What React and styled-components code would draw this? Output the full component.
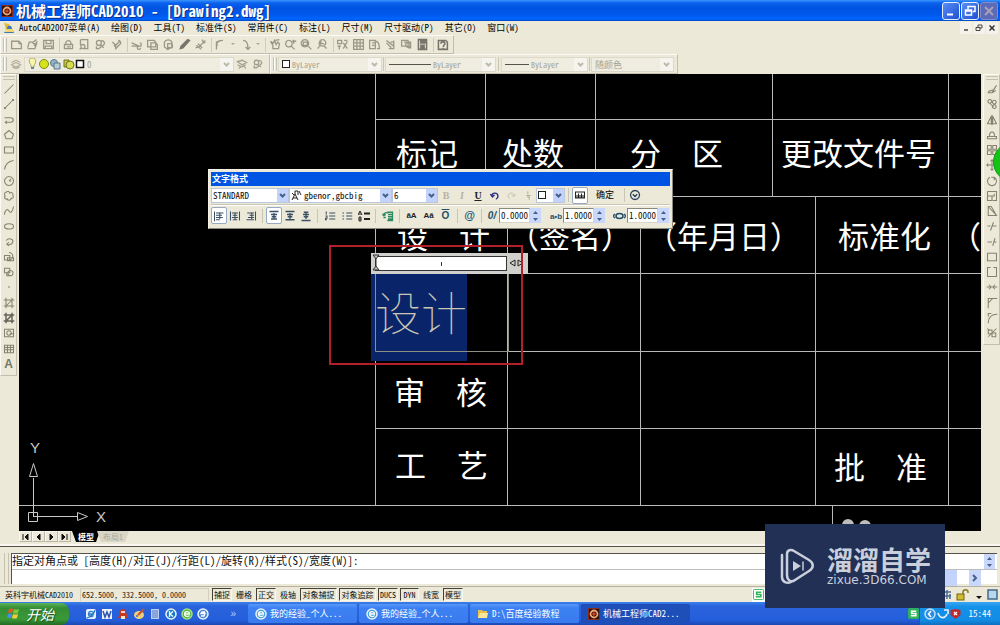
import React from "react";
import styled, { createGlobalStyle, css } from "styled-components";

const Global = createGlobalStyle`
  * { box-sizing: border-box; }
  html, body { margin: 0; padding: 0; background: #ece9d8; }
  body { font-family: "Noto Sans Mono CJK SC", "Liberation Mono", "Noto Sans CJK SC", monospace; font-size: 9px; color: #111; overflow: hidden; }
  button, input, select { font: inherit; color: inherit; margin: 0; padding: 0; border: 0; background: none; border-radius: 0; }
  svg { display: block; flex: none; }
`;

const Shell = styled.div`display: flex; flex-direction: column; min-height: 100vh; background: #ece9d8; white-space: nowrap;`;

/* ---------- icons ---------- */
const PATHS = {
  newFile: "M2 4h9l3 3v6H2zM11 4v3h3",
  open: "M2 12l2-7h4l1 2h4l-2 6H2M9 5l4-3M10 10l4-6",
  save: "M2 3h12v10H2zM5 3v4h6V3M4 13V10h8v3",
  print: "M3 8h10v5H3zM5 8c-2-6 7-7 6 0M6 11h5",
  preview: "M3 2h9v11H6M3 2v7M6 8a2.500 2.500 0 1 0 .1 0M5 12l-3 2",
  publish: "M3 6c0-4 6-4 6 0s-6 4-6 0M8 4c4-2 7 3 3 5l-5 4H3v-3M8 9l4 3",
  match: "M3 5l4 4 5-5M7 9v5M10 3a3 3 0 0 1 3 4l-5 5-3-3",
  cut: "M2 6l9 4M2 10h12M12 6a2 2 0 1 1-.1 4M11 10a2 2 0 1 0 2 2",
  copy: "M2 3h8l2 2v6H2zM6 6h6l2 2v6H6z",
  paste: "M3 5c2-4 8-3 9 0l1 6-6 3-4-3zM7 7h5v5H7z",
  brush: "M3 13l3-1 8-9-2-1-8 8z",
  brush2: "M2 12l4-1 5-5 3-3M5 7l5 5M3 9l6 5M10 2l2 4 2-1",
  undo: "M8 3l-5 2 1 5M3 8c1-4 5-5 8-5M3 5v9",
  redo: "M5 3c4 0 6 4 6 10M8 11l3 3 3-3",
  pan: "M3 4l3 5v4h7l1-6-2-2-2 3-2-5-2 4-2-3M9 3l5-1",
  zoomRt: "M6 3a4 4 0 1 0 .1 0M9 10l4 4M10 4h5M12 2v5",
  zoomWin: "M6 2a4.500 4.500 0 1 0 .1 0M10 10l4 4M4 5h5v4H4z",
  zoomPrev: "M8 2a4 4 0 1 0 .1 0M5 9l-3 4M7 4l-3 3h6M10 10l3 3",
  props: "M2 3h5v4H2zM2 10h4M10 3h4M9 6l5 7M14 4l-5 9M4 9v5",
  grid: "M2 2h12v12H2zM2 6h12M2 10h12M6 2v12M10 2v12",
  palette: "M2 3h7v10H2zM5 6h4M5 9h3M10 4c4 1 4 5 4 9h-3",
  sheet: "M3 3l9 7M12 3v10H6M3 6l6 6M8 5h4",
  markup: "M2 3h8v7H2zM5 5h8v6M7 7c3-3 7 0 5 3s-6 1-5-3M10 12h4",
  calc: "M3 2h10v12H3zM5 4h6v2H5M5 9h6M5 11h6M5 13h6M7 8v6M9 8v6",
  help: "M3 3h9l2 2v9H3zM6 7c0-3 5-3 5 0 0 2-2 1-2 4M9 12v1",
  layers: "M2 9l6-3 6 3-6 3zM2 6l6-3 6 3M3 12l5 2 5-2",
  layersB: "M2 5l6-2 6 3-6 3zM2 9l6 3 5-3M9 8l4 6M6 12l-2 2",
  line: "M2 14L14 2", ray: "M2 14L14 2M2 12v2h2M12 2h2v2",
  pline: "M2 5h8c5 0 5 6 0 6H3M5 9l-2 2 2 2",
  polygon: "M8 2l6 5-2 6H4L2 7z", rect: "M2 4h12v8H2z",
  arc: "M2 14C3 7 7 3 14 2", circle: "M8 2a6 6 0 1 0 .1 0M8 8l3-3M8 8h3",
  cloud: "M4 3c2-2 5-1 5 1 3-2 5 1 4 3 2 2 0 5-2 4-1 4-5 3-5 1-4 1-5-3-3-4-2-2-1-4 1-5z",
  spline: "M2 13c0-6 4-9 6-5s5 1 6-6", ellipse: "M8 5c8 0 8 7 0 7s-8-7 0-7z",
  earc: "M4 6c4-4 10-2 9 2s-6 4-8 3M8 8l-3 3 3 2",
  insert: "M2 6h7v6H2zM8 2a5 5 0 1 1 0 10M6 9h8v4H6z", block: "M2 3h7v6H2zM6 9h3M10 6a3.500 3.500 0 1 1-.1 0M5 9v4h4",
  point: "M7 8h2M8 7v2", hatch: "M4 1v14M12 1v14M1 4h14M1 12h14M5 11l6-6",
  region: "M2 3h12v10H2zM8 5a3 3 0 1 0 .1 0M9 9h5", table: "M2 3h12v10H2zM2 6h12M2 9h12M6 3v10M10 3v10",
  erase: "M3 13h5l6-10-4 6-6 2zM8 13l5-3",
  copyObj: "M5 2a2.500 2.500 0 1 0 .1 0M11 3a2.500 2.500 0 1 0 .1 0M11 9a2.500 2.500 0 1 0 .1 0M5 7l5 5",
  mirror: "M7 3v10H2zM9 3v10h5zM8 1v14", offset: "M2 13h12v-3h-3c2-8-8-8-6 0H2zM6 10h4",
  array: "M2 2h5v5H2zM9 2h5v5H9zM2 9h5v5H2zM9 9h5v5H9z",
  move: "M8 1v14M1 8h14M6 3l2-2 2 2M6 13l2 2 2-2M3 6L1 8l2 2M13 6l2 2-2 2",
  rotate: "M5 3a6 6 0 1 0 6 0M11 3h-4M11 3v4", scale: "M2 2h12v12H9M2 2v12h6V8H2M8 8h3V5",
  stretch: "M3 2v12h11zM3 2h4l7 12", trim: "M2 8h4M9 8h5M10 3L6 14", extend: "M2 8h6M11 8h3M12 3L9 13",
  breakPt: "M2 3h12v10H2z", brk: "M6 2H2v12h12V2h-4", join: "M1 8h6M9 8h6M4 5l3 3-3 3M12 5L9 8l3 3",
  chamfer: "M3 15V8l6-6h6M3 8V2h6", fillet: "M3 15c0-8 3-12 12-12M3 6V2h4", explode: "M3 13L14 2M3 4h5v5H3zM8 8h5v5H8zM2 2l3 3",
  alignL: "M2 2v13M4 4h10M4 7h8M4 10h9M4 13h5M9 3v9", alignC: "M2 2v12M14 2v12M4 4h8M5 7h6M4 10h8M5 13h6M8 3v10", alignR: "M14 2v12M3 4h9M6 7h6M4 10h8M2 13h10M9 3v9",
  top: "M2 2h12M4 6h8M5 9h6M4 12h8M8 4v9", middle: "M2 2h12M4 6h8M5 9h6M2 13h12M8 4v8", bottom: "M5 3h6M4 6h8M5 9h6M2 14h12M8 3v9",
  numList: "M3 2v4M2 8h2v3H2v2h2M7 4h8M7 8h8M7 12h8", bullets: "M2 4h2M2 8h2M2 12h2M7 4h8M7 8h8M7 12h8",
  field: "M7 3h7v11H7M8 6h6M8 9h6M8 12h6M2 8c0-4 3-5 6-4M2 8l-1-3M2 8l3-2M5 10H2",
  ruler: "M2 4h12v8H2zM4 8v4M6 6v6M8 8v4M10 6v6M12 8v4",
  undoBlue: "M2 6l3 4 3-3M4 9c0-6 9-6 9 0 0 2-2 4-3 4", redoGray: "M14 6l-3 4-3-3M12 9c0-6-9-6-9 0 0 2 2 3 3 3",
  frac: "M5 8h6M7 2v4M9 10v4M6 10h3", expand: "M8 2a6 6 0 1 0 .1 0M5 7l3 3 3-3",
};
const Glyph = ({ name, size = 12, color = "#85826f", width = 1.4, fill = "none" }) => (
  <svg width={size} height={size} viewBox="0 0 16 16" fill={fill} stroke={color} strokeWidth={width} aria-hidden="true"><path d={PATHS[name]} /></svg>
);

/* ---------- title and menus ---------- */
const TitleBar = styled.header`
  display: flex; align-items: center; gap: 3px; height: 21px; padding: 0 2px 0 1px; color: #fff;
  background: linear-gradient(#3a94fb 0, #0a62ee 3px, #0053e1 8px, #0059ee 15px, #0066ff 19px, #0049c5 21px);
`;
const Title = styled.h1`margin: 0; flex: 1; font-size: 15px; line-height: 20px; font-weight: 700; text-shadow: 1px 1px 0 #0a2f8a;`;
const WinButton = styled.button`
  display: grid; place-items: center; width: 18px; height: 18px; border: 1px solid #e8effc; border-radius: 3px;
  background: ${(p) => (p.$dim ? "#5b6bb8" : "linear-gradient(135deg, #5a8df5, #1d50d0)")};
  ${(p) => p.$dim && css`border-color: #7f8cc9;`}
`;
const WinButtons = styled.div`display: flex; gap: 1px;`;
const MenuBar = styled.nav`display: flex; align-items: center; height: 14px; padding: 0 2px 0 3px;`;
const MenuItems = styled.div`display: flex; gap: 11px; flex: 1; margin-left: 4px;`;
const MenuButton = styled.button`font-size: 9px; line-height: 14px; color: #000;`;
const ChildButtons = styled.div`display: flex; gap: 1px;`;
const ChildButton = styled.button`display: grid; place-items: center; width: 12px; height: 12px; background: #f4f2ea;`;

const AppIcon = ({ size = 12 }) => (
  <svg width={size} height={size} viewBox="0 0 12 12"><rect width="12" height="12" fill="#8a2a1c" /><rect x="1" y="1" width="10" height="10" fill="#2b0f0c" /><circle cx="6" cy="6" r="3.500" fill="none" stroke="#eda870" strokeWidth="1.800" /><circle cx="6" cy="6" r="1.800" fill="#d6402a" /></svg>
);

/* ---------- toolbars ---------- */
const Band = styled.div`display: flex; height: ${(p) => p.$h}px;`;
const Toolbar = styled.div`
  display: flex; align-items: center; padding: 0 3px 0 0;
  border: 1px solid; border-color: #fbfaf4 #c1bead #c1bead #fbfaf4;
`;
const Grip = styled.span`width: 4px; height: 14px; margin: 0 1px 0 2px; border: 1px solid #c4c1b0; border-width: 0 1px; box-shadow: inset 1px 0 #fff;`;
const ToolButton = styled.button`display: grid; place-items: center; width: ${(p) => p.$w || 16}px; height: 16px;`;
const Divider = styled.span`flex: none; width: 1px; height: 14px; margin: 0 ${(p) => p.$m || 0}px; background: #c9c6b5;`;
const ThinGap = styled.span`width: 4px; height: 14px; border-right: 1px solid #cfccbc;`;

const Combo = styled.label`
  display: flex; align-items: center; gap: 2px; height: 15px; width: ${(p) => p.$w}px; padding-left: ${(p) => (p.$live ? 1 : 3)}px;
  color: ${(p) => (p.$live ? "#111" : "#a5a292")};
  background: ${(p) => (p.$live ? "#fff" : "#efede0")};
  border: 1px solid ${(p) => (p.$live ? "#b9c7dd" : "#dcd9ca")};
`;
const Picker = styled.select`appearance: none; flex: 1; min-width: 0; height: 13px; outline: none; font-size: ${(p) => p.$fs || 9}px; line-height: 13px; opacity: 1;`;
const ArrowBox = styled.span`
  display: grid; place-items: center; width: ${(p) => (p.$live ? 11 : 13)}px; height: 13px;
  background: ${(p) => (p.$live ? "#c3d3fb" : "#f5f4ee")};
`;
const Arrow = ({ live }) => (
  <ArrowBox $live={live}><svg width="7" height="5" viewBox="0 0 7 5" fill="none" stroke={live ? "#44608c" : "#bdbaa9"} strokeWidth="2"><path d="M1 1l2.500 2.500L6 1" /></svg></ArrowBox>
);
const Field = ({ label, value, w, live, fs, children }) => (
  <Combo $w={w} $live={live}>{children}
    <Picker aria-label={label} disabled={!live} $fs={fs} defaultValue={value}><option>{value}</option></Picker>
    <Arrow live={live} />
  </Combo>
);
const Swatch = styled.span`width: 8px; height: 8px; border: 1px solid #222; background: #fff; flex: none;`;
const LineSample = styled.span`width: ${(p) => p.$w}px; height: 1px; background: #55534a; flex: none;`;

const TOP_TOOLS = [
  ["newFile", "open", "save"], ["print", "preview", "publish", "match"], ["cut", "copy", "paste", "brush", "brush2"],
  ["undo", "", "redo", ""], ["pan", "zoomRt", "zoomWin", "zoomPrev"], ["props", "grid", "palette", "sheet", "markup", "calc"], ["help"],
];
const LEFT_TOOLS = ["line", "ray", "pline", "polygon", "rect", "arc", "circle", "cloud", "spline", "ellipse", "earc", "insert", "block", "point", "hatch", "hatchDark", "region", "table", "text"];
const RIGHT_TOOLS = ["erase", "copyObj", "mirror", "offset", "array", "move", "rotate", "scale", "stretch", "trim", "extend", "breakPt", "brk", "join", "chamfer", "fillet", "explode"];
const DARK = { brush: 1, calc: 1, help: 1 };

/* ---------- workspace ---------- */
const Workspace = styled.main`display: flex; flex: 1; min-height: 0;`;
const Side = styled.aside`position: relative; width: 19px; overflow: hidden; flex: none;`;
const SideBar = styled.div`
  display: flex; flex-direction: column; align-items: center; width: 17px; margin-left: ${(p) => (p.$right ? 2 : 0)}px; padding-bottom: 4px;
  border: 1px solid; border-color: #fbfaf4 #c1bead #c1bead #fbfaf4;
`;
const SideGrip = styled.span`width: 12px; height: 4px; margin: 1px 0 2px; border: 1px solid #c4c1b0; border-width: 1px 0;`;
const SideTools = styled.div`display: flex; flex-direction: column; justify-content: space-between; height: ${(p) => p.$h}px;`;
const SideButton = styled.button`display: grid; place-items: center; width: 15px; height: 14px;`;
const TextTool = styled.span`font: 700 12px/14px "Liberation Sans", sans-serif; color: #77756b;`;
const GreenBall = styled.span`position: absolute; top: 68px; left: 12px; width: 40px; height: 40px; border-radius: 50%; background: #14c414; border: 1px solid #0b9a1d;`;
const Canvas = styled.section`position: relative; flex: 1; min-width: 0; overflow: hidden; background: #000;`;
const Drawing = styled.svg`position: absolute; left: 0; top: 0;`;
const Label = styled.span`
  position: absolute; left: ${(p) => p.$x}px; top: ${(p) => p.$y}px; color: #fff;
  font: 400 31px/36px "Noto Sans CJK SC", sans-serif; white-space: pre;
`;
const Axis = styled(Label)`font: 400 15px/16px "Liberation Sans", sans-serif; color: #c9c9c9;`;
const LABELS = [
  [377, 60, "标记"], [483, 60, "处数"], [611, 60, "分　区"], [762, 60, "更改文件号"],
  [378, 143, "设　计"], [489, 143, "（签名）"], [627, 143, "（年月日）"], [819, 143, "标准化"], [931, 143, "（"],
  [375, 299, "审　核"], [376, 372, "工　艺"], [815, 374, "批　准"],
];

const Editor = styled.div`position: absolute; left: 352px; top: 179px; width: 157px;`;
const Ruler = styled.div`display: flex; align-items: center; gap: 2px; height: 21px; padding: 0 4px; background: #d2d0cc;`;
const RulerTrack = styled.div`display: grid; place-items: center; width: 133px; height: 15px; background: #fff; border: 1px solid #333; font-size: 8px;`;
const Tick = styled.span`width: 1px; height: 4px; background: #333;`;
const Selection = styled.div`
  width: 96px; height: 87px; padding: 8px 0 0 4px; background: #0a246a; color: #c9c6b4;
  font: 100 46px/56px "Noto Sans CJK SC", sans-serif; overflow: hidden;
`;
const Mark = styled.div`position: absolute; left: 310px; top: 171px; width: 194px; height: 120px; border: 2px solid #b3202a;`;

/* ---------- text format panel ---------- */
const Panel = styled.div`
  position: absolute; left: 189px; top: 95px; width: 465px; padding: 2px; background: #ece9d8;
  border: 1px solid; border-color: #f4f2e8 #8d8a7c #8d8a7c #f4f2e8;
`;
const PanelTitle = styled.h2`margin: 0; padding-left: 1px; font-size: 9px; line-height: 14px; font-weight: 700; color: #fff; background: #0054e3;`;
const PanelRow = styled.div`display: flex; align-items: center; height: ${(p) => p.$h}px; ${(p) => p.$line && css`border-top: 1px solid #c9c6b5; box-shadow: inset 0 1px #fff;`}`;
const FormatButton = styled.button`
  display: grid; place-items: center; flex: none; width: ${(p) => (p.$wide ? 17 : 16)}px; height: 17px; color: ${(p) => p.$c || "#222"};
  ${(p) => p.$on && css`background: #fff; border: 1px solid #98a9c4; border-radius: 2px;`}
`;
const Letter = styled.span`font: ${(p) => (p.$i ? "italic" : "normal")} 700 ${(p) => p.$s || 10}px/13px "Liberation ${(p) => (p.$sans ? "Sans" : "Serif")}", serif; text-decoration: ${(p) => p.$d || "none"};`;
const OkButton = styled.button`width: 34px; font-size: 9px; line-height: 14px; color: #000;`;
const Spins = styled.div`display: flex; gap: 8px; flex: none;`;
const Spin = styled.label`display: flex; align-items: center;`;
const SpinSign = styled.span`width: 14px; flex: none; text-align: center; color: #26506b;`;
const SpinInput = styled.input`width: 31px; height: 15px; padding: 0 0 0 1px; background: #fff; border: 1px solid; border-color: #8a897e #d8d5c6 #d8d5c6 #8a897e; font-size: 9px; line-height: 13px; outline: none;`;
const Stepper = styled.span`display: grid; place-items: center; flex: none; width: 11px; height: 15px; background: #c9d7fb;`;
const Steps = () => <Stepper><svg width="7" height="12" viewBox="0 0 7 12" fill="#44608c"><path d="M1 4l2.500-3L6 4zM1 8l2.500 3L6 8z" /></svg></Stepper>;

const FormatPanel = () => (
  <Panel role="dialog" aria-label="文字格式">
    <PanelTitle>文字格式</PanelTitle>
    <PanelRow $h={18}>
      <Field label="样式" value="STANDARD" w={78} live />
      <Field label="字体" value="gbenor,gbcbig" w={103} live>
        <svg width="11" height="11" viewBox="0 0 11 11" fill="none" stroke="#222"><path d="M1 10l3-6 3 6M2 8h4M4 4V1h3v4M8 1l2 4M1 3l2 2" /></svg>
      </Field>
      <Field label="高度" value="6" w={46} live />
      <FormatButton $c="#b5b2a2" aria-label="粗体"><Letter>B</Letter></FormatButton>
      <FormatButton $c="#b5b2a2" aria-label="斜体"><Letter $i>I</Letter></FormatButton>
      <FormatButton aria-label="下划线"><Letter $d="underline">U</Letter></FormatButton>
      <FormatButton $wide aria-label="放弃"><Glyph name="undoBlue" size={11} color="#2a2a86" width={2} /></FormatButton>
      <FormatButton $wide aria-label="重做"><Glyph name="redoGray" size={11} color="#c3c0b1" /></FormatButton>
      <FormatButton aria-label="堆叠"><Glyph name="frac" size={11} color="#aaa797" /></FormatButton>
      <Combo $w={29} $live><Swatch /><Picker aria-label="颜色"><option> </option></Picker><Arrow live /></Combo>
      <Divider $m={3} />
      <FormatButton $on aria-label="标尺"><Glyph name="ruler" color="#222" /></FormatButton>
      <OkButton>确定</OkButton>
      <Divider $m={2} />
      <FormatButton aria-label="选项"><Glyph name="expand" color="#24405c" width={1.7} /></FormatButton>
    </PanelRow>
    <PanelRow $h={22} $line>
      {["alignL", "alignC", "alignR"].map((n, i) => <FormatButton key={n} $on={i === 0} aria-label={n}><Glyph name={n} color="#3a4f63" /></FormatButton>)}
      <Divider $m={3} />
      {["top", "middle", "bottom"].map((n, i) => <FormatButton key={n} $on={i === 0} aria-label={n}><Glyph name={n} color="#3a4f63" width={1.7} /></FormatButton>)}
      <Divider $m={3} />
      {["numList", "bullets"].map((n) => <FormatButton $wide key={n} aria-label={n}><Glyph name={n} color="#3a4f63" /></FormatButton>)}
      <FormatButton $wide aria-label="大写字母"><svg width="12" height="12" viewBox="0 0 12 12" fill="none" stroke="#222"><path d="M0 5l2-4 2 4M1 4h2M1 7h2v4H1zM1 9h2" /><path d="M6 3.500h6M6 9h6" strokeWidth="2" /></svg></FormatButton>
      <Divider $m={3} />
      <FormatButton $wide aria-label="插入字段"><Glyph name="field" color="#2a8a62" width={1.7} /></FormatButton>
      <Divider $m={3} />
      <FormatButton $wide aria-label="大写"><Letter $sans $s={8}>ăA</Letter></FormatButton>
      <FormatButton $wide aria-label="小写"><Letter $sans $s={8}>Aă</Letter></FormatButton>
      <FormatButton $c="#26506b" $wide aria-label="上划线"><Letter $sans $d="overline">O</Letter></FormatButton>
      <Divider $m={3} />
      <FormatButton $c="#1c5577" $wide aria-label="符号"><Letter $sans $s={11}>@</Letter></FormatButton>
      <Divider $m={3} />
      <Spins>
        <Spin><SpinSign><Letter $i $sans>0/</Letter></SpinSign><SpinInput aria-label="倾斜角度" defaultValue="0.0000" /><Steps /></Spin>
        <Spin><SpinSign><Letter $sans $s={8}>a•b</Letter></SpinSign><SpinInput aria-label="追踪" defaultValue="1.0000" /><Steps /></Spin>
        <Spin><SpinSign><svg width="13" height="8" viewBox="0 0 13 8" fill="none" stroke="#26506b" strokeWidth="1.500"><ellipse cx="6.500" cy="4" rx="3.500" ry="2.500" /><path d="M2 2L0 4l2 2M11 2l2 2-2 2" /></svg></SpinSign><SpinInput aria-label="宽度比例" defaultValue="1.0000" /><Steps /></Spin>
      </Spins>
    </PanelRow>
  </Panel>
);

/* ---------- lower bars ---------- */
const TabRow = styled.div`display: flex; align-items: flex-start; height: 16px; padding-left: 19px; border-bottom: 1px solid #55534a; box-shadow: inset 0 -2px #f8f6ee;`;
const NavButton = styled.button`display: grid; place-items: center; width: 13px; height: 11px; border: 1px solid; border-color: #f8f7f0 #bab7a6 #bab7a6 #f8f7f0;`;
const Tab = styled.button`
  width: ${(p) => (p.$on ? 28 : 32)}px; height: 11px; margin-left: ${(p) => (p.$on ? 1 : -3)}px; font-size: 8px; line-height: 10px;
  clip-path: polygon(0 0, 100% 0, calc(100% - 4px) 100%, 4px 100%);
  background: ${(p) => (p.$on ? "#000" : "#d9d6c7")}; color: ${(p) => (p.$on ? "#fff" : "#aaa797")}; font-weight: ${(p) => (p.$on ? 700 : 400)};
`;
const Command = styled.div`display: flex; height: 39px; padding: 6px 3px 2px 4px;`;
const CommandGrip = styled.span`width: 5px; margin-right: 2px; border: 1px solid #c4c1b0; border-width: 0 1px;`;
const CommandBody = styled.div`display: flex; flex-direction: column; flex: 1; min-width: 0; background: #fff; border: 1px solid #55534a; border-width: 1px 0 0 1px;`;
const CommandLog = styled.div`display: flex; justify-content: space-between; height: 16px; padding-right: 2px; font-size: 11px; line-height: 12px; border-bottom: 1px solid #bdbdbd;`;
const CommandEntry = styled.div`display: flex; flex: 1; padding-right: 16px;`;
const CommandInput = styled.input`flex: 1; min-width: 0; outline: none; font-size: 11px;`;
const Thumb = styled.span`width: 12px; margin-right: 12px; background: #c3d3fb;`;
const ScrollButton = styled.button`display: grid; place-items: center; width: 12px; background: #c9d7fb; color: #44608c;`;

const Status = styled.footer`display: flex; align-items: center; height: 16px; padding: 0 2px 0 4px; border-top: 1px solid #b5b2a2; font-size: 8px; line-height: 12px;`;
const StatusCell = styled.span`width: ${(p) => p.$w}px; padding-left: 1px; ${(p) => p.$box && css`border: 1px solid #d2cfbf; border-width: 1px 1px 0 1px;`}`;
const Toggles = styled.div`display: flex; gap: 2px; flex: 1; padding-left: 3px;`;
const Toggle = styled.button`
  padding: 0 1px; min-width: ${(p) => (p.$wide ? 37 : 19)}px; height: 13px; font-size: 8px; line-height: 11px; border: 1px solid transparent;
  ${(p) => p.$on && css`border-color: #444238 #f8f7f0 #f8f7f0 #444238;`}
`;
const ImeBadge = styled.span`display: flex; align-items: center; width: 190px; height: 14px; padding-left: 1px; background: #f8fbf6;`;
const StatusTray = styled.div`display: flex; align-items: center; gap: 3px;`;

const Taskbar = styled.footer`display: flex; align-items: center; height: 23px; color: #fff; background: linear-gradient(#3c81ee 0, #2a63dc 4px, #245edb 18px, #1c49b2 23px);`;
const Start = styled.button`
  display: flex; align-items: center; gap: 6px; width: 69px; height: 22px; padding-left: 7px; border-radius: 0 8px 8px 0;
  background: linear-gradient(#5cb35a, #348c33 5px, #3a9a38 16px, #226b22); color: #fff; font-size: 14px; line-height: 18px; font-style: italic; text-shadow: 1px 1px 1px #174a17;
`;
const Quick = styled.div`display: flex; gap: 3px; width: 179px; padding: 0 12px 0 15px; align-items: center;`;
const QuickButton = styled.button`display: grid; place-items: center; width: 13px; height: 14px;`;
const Chevron = styled.span`margin-left: auto; font: 10px/12px "Liberation Sans", sans-serif; color: #b7cffa;`;
const Tasks = styled.div`display: flex; gap: 2px; flex: 1; min-width: 0;`;
const Task = styled.button`
  display: flex; align-items: center; gap: 3px; width: 109px; height: 19px; padding-left: 7px; border-radius: 2px; font-size: 9px; color: #fff;
  background: ${(p) => (p.$on ? "#1e4fb8" : "linear-gradient(#5a98f8, #3c81f3 4px, #3a7bee)")};
`;
const Tray = styled.div`display: flex; align-items: center; gap: 1px; height: 23px; padding: 0 9px 0 4px; background: linear-gradient(#3aa6f2, #1591e9 5px, #128ce4 18px, #0f6fc0); border-left: 1px solid #1458b0;`;
const Clock = styled.time`margin-left: 6px; font-size: 9px;`;

const Orb = ({ ring, fill, children }) => (
  <svg width="12" height="12" viewBox="0 0 12 12"><circle cx="6" cy="6" r="5" fill={fill} stroke={ring} strokeWidth="1.500" />{children}</svg>
);
const Browser = () => <Orb ring="#e8f4ff" fill="#3b9ad8"><path d="M3.500 6h5c0-3.500-5-3-5 0s4 3 5 1.500" fill="none" stroke="#fff" strokeWidth="1.300" /></Orb>;
const SLogo = ({ size = 11, bg = "#2fb457", ink = "#fff" }) => <svg width={size} height={size} viewBox="0 0 12 12"><rect x=".5" y=".5" width="11" height="11" rx="1" fill={bg} stroke="#2fb457" /><path d="M9 3.500H4V6h4.500v2.500H3" fill="none" stroke={ink} strokeWidth="1.800" /></svg>;
const QUICK = [
  ["IE", <svg width="12" height="12" viewBox="0 0 12 12"><rect x="1" y="1" width="10" height="10" rx="2" fill="#e6f1ff" /><path d="M3.500 6h5c0-4-5-3-5 0s4 3 5 1.500M2 10c3-1 7-4 8-8" fill="none" stroke="#2a78c8" strokeWidth="1.300" /></svg>],
  ["Word", <svg width="12" height="12" viewBox="0 0 12 12"><rect x="1" y="1" width="10" height="10" fill="#eef3ff" /><path d="M2 3l2 6 2-5 2 5 2-6" fill="none" stroke="#2c55b0" strokeWidth="1.500" /></svg>],
  ["QQ", <svg width="12" height="12" viewBox="0 0 12 12"><path d="M6 1c4 0 3 4 4 6l1 3H1l1-3c1-2 0-6 4-6" fill="#c23a22" /><path d="M4 8h4v3H4z" fill="#f5e6c8" /><circle cx="5" cy="4" r="1" fill="#fff" /><circle cx="7" cy="4" r="1" fill="#fff" /></svg>],
  ["画笔", <svg width="12" height="12" viewBox="0 0 12 12"><ellipse cx="6" cy="7" rx="5" ry="4" fill="#f3cf7c" /><path d="M5 7l6-6" stroke="#c4522c" strokeWidth="2" /><circle cx="4" cy="8" r="1" fill="#3470c8" /></svg>],
  ["记事本", <svg width="12" height="12" viewBox="0 0 12 12"><path d="M2 1h8v10H2z" fill="#b9cdf5" /><path d="M3 3h6M3 5h6M3 7h6M3 9h6" stroke="#5a7ec8" /></svg>],
  ["酷狗", <Orb ring="#e8f4ff" fill="#1878c8"><path d="M4.500 3v6M8 3.500L5 6l3 2.500" fill="none" stroke="#fff" strokeWidth="1.300" /></Orb>],
  ["360", <Orb ring="#a5e07a" fill="#4db53a"><path d="M3.500 6h5c0-3.500-5-3-5 0s4 3 5 1.500" fill="none" stroke="#fff" strokeWidth="1.300" /></Orb>],
  ["搜狗", <Orb ring="#e8f4ff" fill="#4a86d8"><path d="M8 4H5L4 5.500h4L7 8H4" fill="none" stroke="#fff" strokeWidth="1.300" /></Orb>],
];

const Watermark = styled.div`
  position: fixed; right: 55px; bottom: 17px; display: flex; align-items: center; gap: 12px; width: 180px; height: 84px; padding-left: 15px;
  background: #223056; color: #c9cfdb;
`;
const Brand = styled.div`display: flex; flex-direction: column;`;
const BrandName = styled.strong`font: 700 26px/28px "Noto Sans CJK SC", sans-serif;`;
const BrandSite = styled.span`font: 400 12px/14px "DejaVu Sans", sans-serif;`;

const MENUS = ["AutoCAD2007菜单(A)", "绘图(D)", "工具(T)", "标准件(S)", "常用件(C)", "标注(L)", "尺寸(M)", "尺寸驱动(P)", "其它(O)", "窗口(W)"];
const TOGGLES = [["捕捉", 1], ["栅格", 0], ["正交", 1], ["极轴", 0], ["对象捕捉", 1], ["对象追踪", 1], ["DUCS", 1], ["DYN", 1], ["线宽", 0], ["模型", 1]];
const NAVS = ["M2 1v6M7 1v6L4 4z", "M6 1v6L3 4z", "M3 1v6l3-3z", "M2 1v6l3-3zM7 1v6"];
const TASKS = [["我的经验_个人...", <Browser />], ["我的经验_个人...", <Browser />], ["D:\\百度经验教程", <svg width="12" height="12" viewBox="0 0 12 12"><path d="M1 2h4l1 1h4v7H1z" fill="#e8c04c" /><path d="M3 5h8l-1 5H1z" fill="#fbe79a" /></svg>], ["机械工程师CAD2...", <AppIcon />]];

export default function App() {
  return (
    <Shell>
      <Global />
      <TitleBar>
        <AppIcon />
        <Title>机械工程师CAD2010 - [Drawing2.dwg]</Title>
        <WinButtons>
          <WinButton aria-label="最小化"><svg width="12" height="12" viewBox="0 0 12 12"><path d="M2 9.500h6" stroke="#fff" strokeWidth="2" /></svg></WinButton>
          <WinButton aria-label="还原"><svg width="12" height="12" viewBox="0 0 12 12" fill="none" stroke="#fff"><path d="M4 4V1.500h7v5H8.500" strokeWidth="1.500" /><path d="M1.500 5h6v5h-6zM1.500 6h6" strokeWidth="1.500" /></svg></WinButton>
          <WinButton $dim aria-label="关闭"><svg width="12" height="12" viewBox="0 0 12 12"><path d="M2 2l8 8M10 2l-8 8" stroke="#a9a0b8" strokeWidth="2" /></svg></WinButton>
        </WinButtons>
      </TitleBar>
      <MenuBar>
        <svg width="12" height="12" viewBox="0 0 12 12"><path d="M1 1l5 1 3 5H3z" fill="#e3b63c" /><path d="M5 4h3l3 7H1l2-3z" fill="#3d79b5" /><path d="M2 7h8v3H2z" fill="#f2d774" /></svg>
        <MenuItems>{MENUS.map((m) => <MenuButton key={m}>{m}</MenuButton>)}</MenuItems>
        <ChildButtons>
          <ChildButton aria-label="最小化文档"><svg width="8" height="8" viewBox="0 0 8 8"><path d="M2 6h4" stroke="#444" strokeWidth="1.500" /></svg></ChildButton>
          <ChildButton aria-label="还原文档"><svg width="8" height="8" viewBox="0 0 8 8" fill="none" stroke="#444"><path d="M3 3V1h4v3H5M1 3.500h4v3H1z" /></svg></ChildButton>
          <ChildButton aria-label="关闭文档"><svg width="8" height="8" viewBox="0 0 8 8"><path d="M1.500 1.500l5 5M6.500 1.500l-5 5" stroke="#333" strokeWidth="1.500" /></svg></ChildButton>
        </ChildButtons>
      </MenuBar>
      <Band $h={19}>
        <Toolbar>
          <Grip />
          {TOP_TOOLS.map((group, g) => (
            <React.Fragment key={g}>
              {g > 0 && <ThinGap />}
              {group.map((n, i) => n
                ? <ToolButton key={i} aria-label={n}><Glyph name={n} size={13} color={DARK[n] ? "#77756b" : "#9b9887"} width={DARK[n] ? 1.9 : 1.6} fill={n === "brush" ? "#77756b" : "none"} /></ToolButton>
                : <ToolButton key={i} $w={9} aria-label="历史"><svg width="4" height="3" viewBox="0 0 4 3"><path d="M0 0h4L2 2z" fill="#aaa797" /></svg></ToolButton>)}
            </React.Fragment>
          ))}
        </Toolbar>
      </Band>
      <Band $h={20}>
        <Toolbar>
          <Grip />
          <ToolButton aria-label="图层特性"><Glyph name="layers" color="#b5b2a2" width={1.8} /></ToolButton>
          <Field label="图层" value="0" w={210}>
            <svg width="57" height="12" viewBox="0 0 57 12">
              <path d="M4 0c5 0 4 5 2 7v2H3V7C1 5 0 0 4 0" fill="#fbf7a8" stroke="#8b8850" strokeWidth=".7" /><path d="M3 9h3v2H3z" fill="#6f7f9a" />
              <circle cx="16" cy="6" r="4.500" fill="#d6e21c" stroke="#7f8c1a" />
              <circle cx="26" cy="5" r="3.500" fill="#8fb6c9" stroke="#58788a" /><path d="M26 5h6v6h-6z" fill="#b8ccd6" stroke="#58788a" />
              <path d="M36 2h5v7h-5z" fill="#c9cc3c" stroke="#6e7020" /><circle cx="42" cy="7" r="4" fill="#d6dc50" stroke="#6e7020" />
              <path d="M48.500 2.500h7v7h-7z" fill="#fff" stroke="#111" strokeWidth="1.500" />
            </svg>
          </Field>
          <ToolButton aria-label="置为当前"><Glyph name="layersB" color="#a3a092" width={1.8} /></ToolButton>
          <ToolButton aria-label="上一个图层"><Glyph name="publish" color="#a3a092" width={1.8} /></ToolButton>
        </Toolbar>
        <Toolbar>
          <Grip />
          <Field label="颜色" value="ByLayer" w={104} fs={8}><Swatch /></Field>
          <Divider $m={1} />
          <Field label="线型" value="ByLayer" w={111} fs={8}><LineSample $w={42} /></Field>
          <Divider $m={2} />
          <Field label="线宽" value="ByLayer" w={87} fs={8}><LineSample $w={24} /></Field>
          <Divider $m={1} />
          <Field label="打印样式" value="随颜色" w={83} />
        </Toolbar>
      </Band>
      <Workspace>
        <Side>
          <SideBar>
            <SideGrip />
            <SideTools $h={289}>
              {LEFT_TOOLS.map((n) => (
                <SideButton key={n} aria-label={n}>
                  {n === "text" ? <TextTool>A</TextTool> : <Glyph name={n === "hatchDark" ? "hatch" : n} color={n === "hatchDark" ? "#66645a" : undefined} width={n === "hatchDark" ? 2 : 1.4} fill={n === "hatchDark" ? "#8f8c80" : "none"} />}
                </SideButton>
              ))}
            </SideTools>
          </SideBar>
        </Side>
        <Canvas>
          <Drawing width="2000" height="1200" viewBox="0 0 2000 1200" fill="none" stroke="#b9b9b9" shapeRendering="crispEdges">
            <path d="M356.500 0V431M466.500 0V122M576.500 0V122M753.500 0V122M929.500 0V431M488.500 122V431M621.500 122V431M796.500 122V431M813.500 431V457" />
            <path d="M356 45.500H2000M356 122.500H2000M356 199.500H2000M356 277.500H2000M356 354.500H2000M0 431.500H2000" />
            <g shapeRendering="auto" stroke="#c9c9c9">
              <path d="M9.500 438.500h9v9h-9zM14.500 443V404M14 442.500H59M14.500 389.500l4 13h-8zM68.500 442.500l-10-4v8z" />
            </g>
            <g fill="#bdbdbd" stroke="none" shapeRendering="auto"><circle cx="829" cy="451" r="6" /><circle cx="846" cy="452" r="6" /></g>
          </Drawing>
          {LABELS.map(([x, y, t]) => <Label key={x + "-" + y} $x={x} $y={y}>{t}</Label>)}
          <Axis $x={11} $y={366}>Y</Axis>
          <Axis $x={77} $y={435}>X</Axis>
          <Editor>
            <Ruler>
              <RulerTrack><Tick /></RulerTrack>
              <svg width="15" height="9" viewBox="0 0 15 9" fill="none" stroke="#222"><path d="M6 1v6L1 4zM9 1v6l5-3z" /></svg>
            </Ruler>
            <Selection>设计</Selection>
          </Editor>
          <Drawing width="2000" height="1200" viewBox="0 0 2000 1200" fill="none" stroke="#8f8f86">
            <path d="M356.500 200V277.500H489.500V200" />
            <path d="M354 181h6l-3 4zM354 196h6l-3-4zM357 185v7" fill="#bbb" stroke="#333" />
          </Drawing>
          <Mark />
          <FormatPanel />
        </Canvas>
        <Side>
          <SideBar $right>
            <SideGrip />
            <SideTools $h={258}>{RIGHT_TOOLS.map((n) => <SideButton key={n} aria-label={n}><Glyph name={n} /></SideButton>)}</SideTools>
          </SideBar>
          <GreenBall />
        </Side>
      </Workspace>
      <TabRow>
        {NAVS.map((d) => <NavButton key={d} aria-label="切换布局"><svg width="9" height="8" viewBox="0 0 9 8" fill="#111" stroke="#111"><path d={d} /></svg></NavButton>)}
        <Tab $on>模型</Tab>
        <Tab>布局1</Tab>
      </TabRow>
      <Command>
        <CommandGrip />
        <CommandBody>
          <CommandLog>
            <span>指定对角点或 [高度(H)/对正(J)/行距(L)/旋转(R)/样式(S)/宽度(W)]:</span>
            <Steps />
          </CommandLog>
          <CommandEntry>
            <CommandInput aria-label="命令" />
            <Thumb />
            <ScrollButton aria-label="向右"><svg width="6" height="8" viewBox="0 0 6 8" fill="none" stroke="#44608c" strokeWidth="2"><path d="M1 1l3 3-3 3" /></svg></ScrollButton>
          </CommandEntry>
        </CommandBody>
      </Command>
      <Status>
        <StatusCell $w={76}>英科宇机械CAD2010</StatusCell>
        <StatusCell $w={129} $box>652.5000, 332.5000, 0.0000</StatusCell>
        <Toggles>{TOGGLES.map(([t, on]) => <Toggle key={t} $on={on} $wide={t.startsWith("对象")}>{t}</Toggle>)}</Toggles>
        <ImeBadge><SLogo bg="#fff" ink="#2fb457" /></ImeBadge>
        <StatusTray>
          <svg width="11" height="11" viewBox="0 0 11 11" fill="none" stroke="#4a6a9a" strokeWidth="1.500"><path d="M1 3h8M5 1v9M2 7h7M8 5v5" /></svg>
          <svg width="13" height="12" viewBox="0 0 13 12"><path d="M7 6V3c0-3 5-3 5 0v1" fill="none" stroke="#8a7c1c" strokeWidth="1.500" /><rect x="1" y="5" width="7" height="6" fill="#d2bd2c" stroke="#6d6214" /></svg>
          <svg width="12" height="12" viewBox="0 0 12 12"><path d="M4 7h6L7 10z" fill="#111" /></svg>
          <svg width="11" height="11" viewBox="0 0 11 11"><rect x="1" y="1" width="9" height="9" fill="#b8d6ee" stroke="#44688c" strokeWidth="1.500" /></svg>
        </StatusTray>
      </Status>
      <Taskbar>
        <Start>
          <svg width="13" height="13" viewBox="0 0 13 13"><path d="M2 2q2-1 4 0L5 6Q3 5 1 6z" fill="#e8562c" /><path d="M7 2q2 1 5 0l-1 4q-3 1-5 0z" fill="#7fc93c" /><path d="M1 7q2-1 4 0l-1 4q-2-1-4 0z" fill="#4a90e8" /><path d="M6 7q2 1 5 0l-1 4q-3 1-5 0z" fill="#f4cc3c" /></svg>
          开始
        </Start>
        <Quick>
          {QUICK.map(([n, icon]) => <QuickButton key={n} aria-label={n}>{icon}</QuickButton>)}
          <Chevron>»</Chevron>
        </Quick>
        <Tasks>{TASKS.map(([t, icon], i) => <Task key={i} $on={i === 3}>{icon}{t}</Task>)}</Tasks>
        <SLogo />
        <Tray>
          <Orb ring="#bfe2ff" fill="#2a8be0"><path d="M7 3L4.500 6 7 9" fill="none" stroke="#fff" strokeWidth="1.600" /></Orb>
          <svg width="12" height="12" viewBox="0 0 12 12" fill="none" stroke="#e8f2ff" strokeWidth="1.600"><path d="M1 5c2 6 7 6 9 1M7 2h4v4" /></svg>
          <svg width="11" height="12" viewBox="0 0 11 12"><path d="M5.500 1l5 1v5l-5 4-5-4V2z" fill="#c4262c" /><path d="M4 4l3 3M7 4L4 7" stroke="#fff" strokeWidth="1.300" /></svg>
          <Clock>15:44</Clock>
        </Tray>
      </Taskbar>
      <Watermark>
        <svg width="35" height="37" viewBox="0 0 35 37" fill="none" stroke="#c9cfdb" strokeWidth="2.500" strokeLinecap="round">
          <path d="M2 7v22c0 5 5 7 9 5" /><path d="M7 27V6c0-4 4-5 7-3l15 9c5 3 5 8 0 11l-14 9c-4 3-8 0-8-5z" /><path d="M13 13l8 5-8 5z" fill="#c9cfdb" stroke="none" /><path d="M23 14v8" strokeWidth="1.500" />
        </svg>
        <Brand><BrandName>溜溜自学</BrandName><BrandSite>zixue.3D66.COM</BrandSite></Brand>
      </Watermark>
    </Shell>
  );
}
